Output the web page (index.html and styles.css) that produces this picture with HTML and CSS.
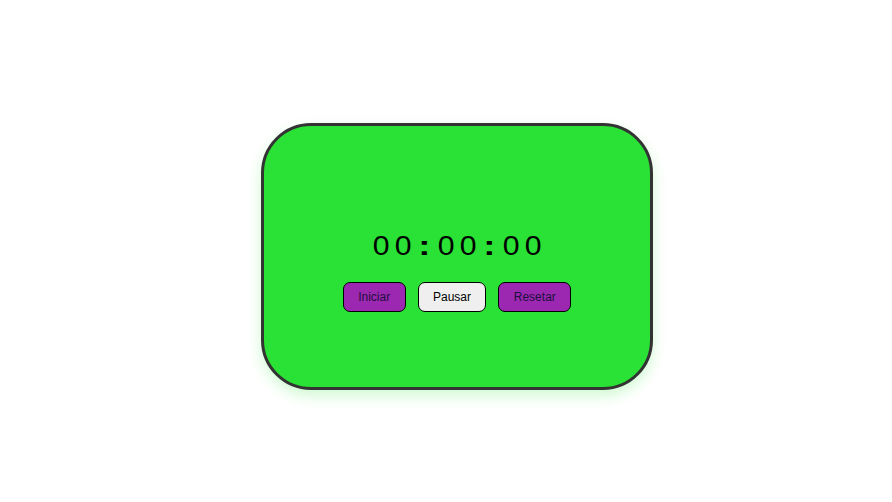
FILE: index.html
```html
<!DOCTYPE html>
<html lang="pt">
<head>
<meta charset="utf-8">
<title>Cronômetro</title>
<link rel="stylesheet" href="styles.css">
</head>
<body>
<div class="card">
  <div class="timer"><span class="d">0</span><span class="d">0</span><span class="c">:</span><span class="d">0</span><span class="d">0</span><span class="c">:</span><span class="d">0</span><span class="d">0</span></div>
  <div class="controls">
    <button class="btn btn-purple">Iniciar</button>
    <button class="btn btn-light">Pausar</button>
    <button class="btn btn-purple">Resetar</button>
  </div>
</div>
</body>
</html>
```
FILE: styles.css
```css
html, body {
  margin: 0;
  padding: 0;
  background: #fff;
}
body {
  height: 502px;
  box-sizing: border-box;
  padding: 11px 0 0 22px;
  display: flex;
  align-items: center;
  justify-content: center;
  font-family: "Liberation Sans", Arial, sans-serif;
}
.card {
  width: 386px;
  height: 261px;
  box-sizing: content-box;
  border: 3px solid #333;
  border-radius: 50px;
  background: #29e235;
  box-shadow: 0 6px 14px rgba(42, 226, 53, 0.22);
  display: flex;
  flex-direction: column;
  align-items: center;
}
.timer {
  margin-top: 104px;
  display: flex;
  font-size: 28px;
  line-height: 32px;
  color: #000;
}
.timer .d {
  display: inline-block;
  width: 22.5px;
  text-align: center;
  transform: scaleX(1.08);
}
.timer .c {
  display: inline-block;
  width: 20px;
  padding-right: 1px;
  box-sizing: border-box;
  text-align: center;
  font-weight: bold;
  transform: scaleX(1.3);
}
.controls {
  margin-top: 20px;
  display: flex;
  gap: 12px;
}
.btn {
  height: 30px;
  padding: 0 14.4px;
  border: 1px solid #000;
  border-radius: 7px;
  font-family: "Liberation Sans", Arial, sans-serif;
  font-size: 12px;
  color: #1c1040;
}
.btn-purple {
  background: #9c27b0;
}
.btn-light {
  background: #efefef;
  color: #000;
}
```
